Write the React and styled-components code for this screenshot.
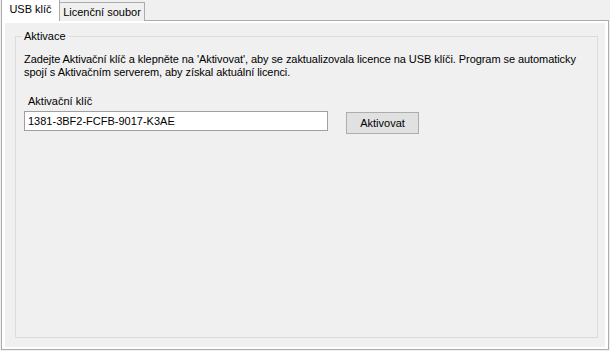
import React from "react";
import styled, { createGlobalStyle } from "styled-components";

const GlobalStyle = createGlobalStyle`
  html, body {
    margin: 0;
    padding: 0;
    background: #f0f0f0;
    font-family: "Liberation Sans", Arial, sans-serif;
    font-size: 11px;
    color: #000;
  }
`;

const Window = styled.div`
  width: 610px;
  height: 351px;
  box-sizing: border-box;
  padding: 0 1px 1px 1px;
  display: flex;
  flex-direction: column;
`;

const TabStrip = styled.div`
  display: flex;
  align-items: flex-end;
  height: 21px;
  margin-bottom: -1px;
  position: relative;
  z-index: 1;
`;

const Tab = styled.div`
  box-sizing: border-box;
  display: flex;
  align-items: center;
  justify-content: center;
  border: 1px solid #acacac;
  border-bottom: none;
  height: ${(p) => (p.$active ? "22px" : "19px")};
  width: ${(p) => (p.$active ? "59px" : "86px")};
  background: ${(p) => (p.$active ? "#ffffff" : "#f0f0f0")};
  padding-bottom: ${(p) => (p.$active ? "3px" : "0")};
  margin-left: ${(p) => (p.$active ? "0" : "-1px")};
  white-space: nowrap;
  line-height: 13px;
`;

const Panel = styled.div`
  flex: 1;
  box-sizing: border-box;
  border: 1px solid #acacac;
  background: #ffffff;
  padding: 2px 3px 2px 3px;
  display: flex;
`;

const Page = styled.div`
  flex: 1;
  background: #f0f0f0;
  padding: 7px 7px 9px 10px;
  display: flex;
`;

const GroupBox = styled.fieldset`
  flex: 1;
  margin: 0;
  padding: 0 8px 0 8px;
  border: 1px solid #dcdcdc;
  min-width: 0;
`;

const Legend = styled.legend`
  margin-left: -2px;
  padding: 0 3px 0 2px;
  line-height: 13px;
`;

const Description = styled.p`
  margin: 10px 0 0 0;
  line-height: 13px;
  width: 560px;
  letter-spacing: -0.07px;
`;

const FieldLabel = styled.div`
  margin: 16px 0 0 4px;
  line-height: 13px;
`;

const Row = styled.div`
  display: flex;
  align-items: flex-start;
  gap: 18px;
  margin-top: 3px;
`;

const TextInput = styled.input`
  box-sizing: border-box;
  width: 304px;
  height: 20px;
  border: 1px solid #a0a0a0;
  background: #ffffff;
  padding: 0 3px;
  font-family: "Liberation Sans", Arial, sans-serif;
  font-size: 11px;
  color: #000;
  outline: none;
`;

const Button = styled.button`
  box-sizing: border-box;
  width: 73px;
  height: 22px;
  margin-top: 1px;
  border: 1px solid #adadad;
  background: #e1e1e1;
  font-family: "Liberation Sans", Arial, sans-serif;
  font-size: 11px;
  color: #000;
  padding: 0;
`;

export default function App() {
  return (
    <>
      <GlobalStyle />
      <Window>
        <TabStrip>
          <Tab $active>USB klíč</Tab>
          <Tab>Licenční soubor</Tab>
        </TabStrip>
        <Panel>
          <Page>
            <GroupBox>
              <Legend>Aktivace</Legend>
              <Description>
                Zadejte Aktivační klíč a klepněte na 'Aktivovat', aby se zaktualizovala licence na USB klíči. Program se automaticky spojí s Aktivačním serverem, aby získal aktuální licenci.
              </Description>
              <FieldLabel>Aktivační klíč</FieldLabel>
              <Row>
                <TextInput defaultValue="1381-3BF2-FCFB-9017-K3AE" />
                <Button>Aktivovat</Button>
              </Row>
            </GroupBox>
          </Page>
        </Panel>
      </Window>
    </>
  );
}
